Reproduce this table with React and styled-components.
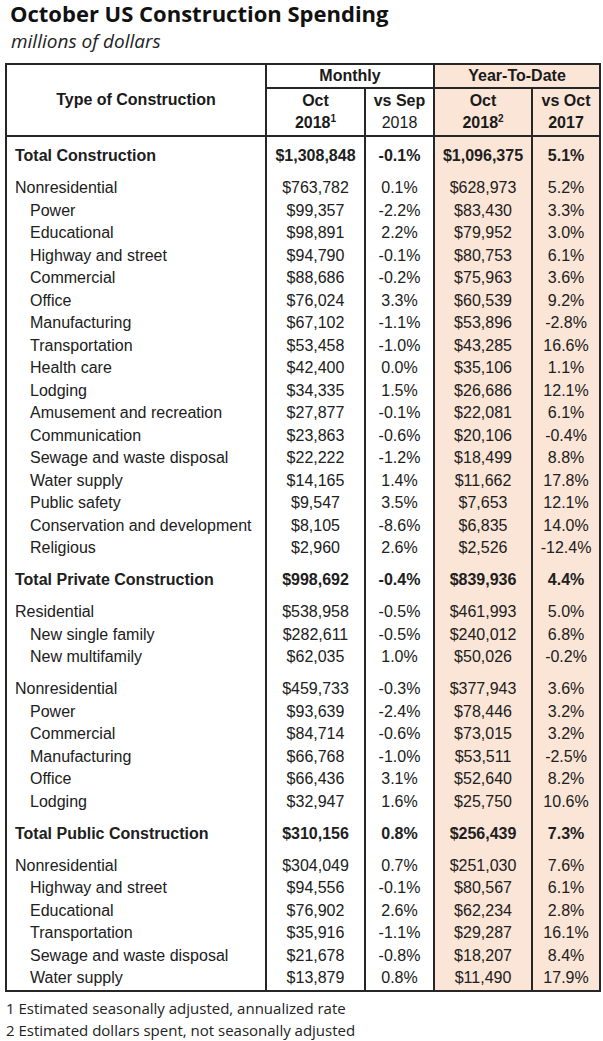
import React from 'react'
import styled, { createGlobalStyle } from 'styled-components';

const GlobalStyle = createGlobalStyle`
    body{
        margin: 0;
        background: #fff;
    }
`;

const sections = [
    { total: true, rows: [['Total Construction', '$1,308,848', '-0.1%', '$1,096,375', '5.1%']] },
    { rows: [
        ['Nonresidential', '$763,782', '0.1%', '$628,973', '5.2%'],
        ['-Power', '$99,357', '-2.2%', '$83,430', '3.3%'],
        ['-Educational', '$98,891', '2.2%', '$79,952', '3.0%'],
        ['-Highway and street', '$94,790', '-0.1%', '$80,753', '6.1%'],
        ['-Commercial', '$88,686', '-0.2%', '$75,963', '3.6%'],
        ['-Office', '$76,024', '3.3%', '$60,539', '9.2%'],
        ['-Manufacturing', '$67,102', '-1.1%', '$53,896', '-2.8%'],
        ['-Transportation', '$53,458', '-1.0%', '$43,285', '16.6%'],
        ['-Health care', '$42,400', '0.0%', '$35,106', '1.1%'],
        ['-Lodging', '$34,335', '1.5%', '$26,686', '12.1%'],
        ['-Amusement and recreation', '$27,877', '-0.1%', '$22,081', '6.1%'],
        ['-Communication', '$23,863', '-0.6%', '$20,106', '-0.4%'],
        ['-Sewage and waste disposal', '$22,222', '-1.2%', '$18,499', '8.8%'],
        ['-Water supply', '$14,165', '1.4%', '$11,662', '17.8%'],
        ['-Public safety', '$9,547', '3.5%', '$7,653', '12.1%'],
        ['-Conservation and development', '$8,105', '-8.6%', '$6,835', '14.0%'],
        ['-Religious', '$2,960', '2.6%', '$2,526', '-12.4%'],
    ] },
    { total: true, rows: [['Total Private Construction', '$998,692', '-0.4%', '$839,936', '4.4%']] },
    { rows: [
        ['Residential', '$538,958', '-0.5%', '$461,993', '5.0%'],
        ['-New single family', '$282,611', '-0.5%', '$240,012', '6.8%'],
        ['-New multifamily', '$62,035', '1.0%', '$50,026', '-0.2%'],
    ] },
    { rows: [
        ['Nonresidential', '$459,733', '-0.3%', '$377,943', '3.6%'],
        ['-Power', '$93,639', '-2.4%', '$78,446', '3.2%'],
        ['-Commercial', '$84,714', '-0.6%', '$73,015', '3.2%'],
        ['-Manufacturing', '$66,768', '-1.0%', '$53,511', '-2.5%'],
        ['-Office', '$66,436', '3.1%', '$52,640', '8.2%'],
        ['-Lodging', '$32,947', '1.6%', '$25,750', '10.6%'],
    ] },
    { total: true, rows: [['Total Public Construction', '$310,156', '0.8%', '$256,439', '7.3%']] },
    { rows: [
        ['Nonresidential', '$304,049', '0.7%', '$251,030', '7.6%'],
        ['-Highway and street', '$94,556', '-0.1%', '$80,567', '6.1%'],
        ['-Educational', '$76,902', '2.6%', '$62,234', '2.8%'],
        ['-Transportation', '$35,916', '-1.1%', '$29,287', '16.1%'],
        ['-Sewage and waste disposal', '$21,678', '-0.8%', '$18,207', '8.4%'],
        ['-Water supply', '$13,879', '0.8%', '$11,490', '17.9%'],
    ] },
];

function App() {
    return (
        <PageStyled>
            <GlobalStyle />
            <Title>October US Construction Spending</Title>
            <Subtitle>millions of dollars</Subtitle>
            <Table>
                <colgroup>
                    <col style={{ width: 260 }} />
                    <col style={{ width: 99 }} />
                    <col style={{ width: 69 }} />
                    <col style={{ width: 98 }} />
                    <col style={{ width: 68 }} />
                </colgroup>
                <thead>
                    <tr>
                        <Th rowSpan={2}>Type of Construction</Th>
                        <Th colSpan={2} $short>Monthly</Th>
                        <Th colSpan={2} $short $ytd>Year-To-Date</Th>
                    </tr>
                    <tr>
                        <Th>Oct<br />2018<sup>1</sup></Th>
                        <Th>vs Sep<br /><span className="light">2018</span></Th>
                        <Th $ytd>Oct<br />2018<sup>2</sup></Th>
                        <Th $ytd>vs Oct<br />2017</Th>
                    </tr>
                </thead>
                <tbody>
                    {sections.map((section, si) =>
                        section.rows.map((row, ri) => {
                            const [label, ...values] = row;
                            const indent = label.startsWith('-');
                            const gap = ri === 0 ? (si === 0 ? 8 : 9.5) : 0;
                            return (
                                <tr key={si + '-' + ri}>
                                    <Label $gap={gap} $bold={section.total} $indent={indent}>
                                        {indent ? label.slice(1) : label}
                                    </Label>
                                    {values.map((v, vi) => (
                                        <Cell key={vi} $gap={gap} $bold={section.total} $ytd={vi > 1}>{v}</Cell>
                                    ))}
                                </tr>
                            );
                        })
                    )}
                </tbody>
            </Table>
            <Notes>
                <p>1 Estimated seasonally adjusted, annualized rate</p>
                <p>2 Estimated dollars spent, not seasonally adjusted</p>
            </Notes>
        </PageStyled>
    )
}

const PageStyled = styled.div`
    width: 603px;
    padding: 0 0 0 5px;
    box-sizing: border-box;
    color: #1c1c1c;
`;

const Title = styled.h1`
    margin: 0;
    padding: 0 0 0 5px;
    font-family: "Open Sans", Lato, sans-serif;
    font-weight: 700;
    font-size: 22px;
    line-height: 27px;
    color: #111;
`;

const Subtitle = styled.div`
    padding: 3px 0 0 6px;
    font-family: "Open Sans", Lato, sans-serif;
    font-style: italic;
    font-size: 19px;
    line-height: 22px;
    height: 33px;
    color: #222;
`;

const Table = styled.table`
    border-collapse: collapse;
    table-layout: fixed;
    width: 596px;
    border: 2px solid #262626;
    font-family: "Liberation Sans", Arial, sans-serif;
    font-size: 16px;
    color: #202020;
`;

const Th = styled.th`
    border: 2px solid #262626;
    background: ${p => p.$ytd ? '#fbe5d6' : '#fff'};
    font-weight: 700;
    line-height: 22px;
    height: ${p => p.$short ? '21px' : '46px'};
    padding: 0;
    text-align: center;
    vertical-align: middle;
    color: #1a1a1a;
    sup{
        font-size: 10px;
        line-height: 0;
        vertical-align: 6px;
    }
    .light{
        font-weight: 400;
    }
`;

const Label = styled.td`
    border-left: 2px solid #262626;
    border-right: 2px solid #262626;
    padding: ${p => p.$gap}px 0 0 ${p => p.$indent ? 23 : 8}px;
    height: 22.5px;
    line-height: 22.5px;
    font-weight: ${p => p.$bold ? 700 : 400};
    white-space: nowrap;
`;

const Cell = styled.td`
    border-left: 2px solid #262626;
    border-right: 2px solid #262626;
    background: ${p => p.$ytd ? '#fbe5d6' : '#fff'};
    padding: ${p => p.$gap}px 0 0;
    height: 22.5px;
    line-height: 22.5px;
    text-align: center;
    font-weight: ${p => p.$bold ? 700 : 400};
`;

const Notes = styled.div`
    padding: 5px 0 0 1px;
    font-family: "Open Sans", Lato, sans-serif;
    font-size: 15px;
    line-height: 22px;
    color: #222;
    p{
        margin: 0;
    }
`;

export default App
